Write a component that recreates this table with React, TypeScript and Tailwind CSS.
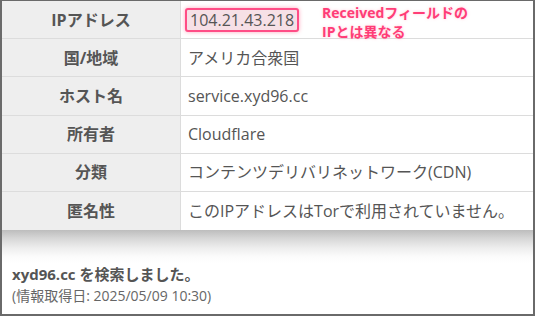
import React from "react";

const rows: { label: string; value: React.ReactNode }[] = [
  { label: "IPアドレス", value: null },
  { label: "国/地域", value: "アメリカ合衆国" },
  { label: "ホスト名", value: "service.xyd96.cc" },
  { label: "所有者", value: "Cloudflare" },
  { label: "分類", value: "コンテンツデリバリネットワーク(CDN)" },
  { label: "匿名性", value: "このIPアドレスはTorで利用されていません。" },
];

export default function App() {
  return (
    <div
      className="relative w-[535px] h-[316px] overflow-hidden bg-white border-x-2 border-b-2 border-t border-[#6a6a6a] flex flex-col"
      style={{ fontFamily: '"Open Sans", "Noto Sans CJK JP", sans-serif' }}
    >
      <div className="flex flex-col">
        {rows.map((r, i) => (
          <div
            key={i}
            className={`flex h-[38.2px] ${i < rows.length - 1 ? "border-b border-[#dcdcdc]" : ""}`}
          >
            <div className="w-[179px] shrink-0 bg-[#eeeeee] border-r border-[#dcdcdc] flex items-center justify-center text-[16px] font-bold text-[#555]">
              {r.label}
            </div>
            <div className="flex-1 flex items-center pl-[7px] text-[16px] text-[#555] relative">
              {i === 0 ? (
                <>
                  <span className="h-[24px] flex items-center px-[3px] rounded-[3px] border-2 border-[#ff4d86] bg-[#f6e0e6] shadow-[0_0_4px_rgba(255,60,110,0.45)] text-[#555] -ml-[3px]">
                    104.21.43.218
                  </span>
                  <div className="absolute left-[141px] top-[2px] text-[14px] leading-[19px] font-bold text-[#ff3d77] [text-shadow:0_0_3px_rgba(255,150,180,0.5)]">
                    <div>Receivedフィールドの</div>
                    <div>IPとは異なる</div>
                  </div>
                </>
              ) : (
                r.value
              )}
            </div>
          </div>
        ))}
      </div>
      <div className="h-[33px] bg-[linear-gradient(to_bottom,#bdbdbd,#d6d6d6_25%,#eeeeee_55%,#fbfbfb_80%,#ffffff)]" />
      <div className="pl-[10px] flex flex-col">
        <div className="text-[15px] font-bold text-[#555] leading-[22px]">xyd96.cc を検索しました。</div>
        <div className="text-[14px] text-[#666] leading-[21px]">(情報取得日: 2025/05/09 10:30)</div>
      </div>
    </div>
  );
}
